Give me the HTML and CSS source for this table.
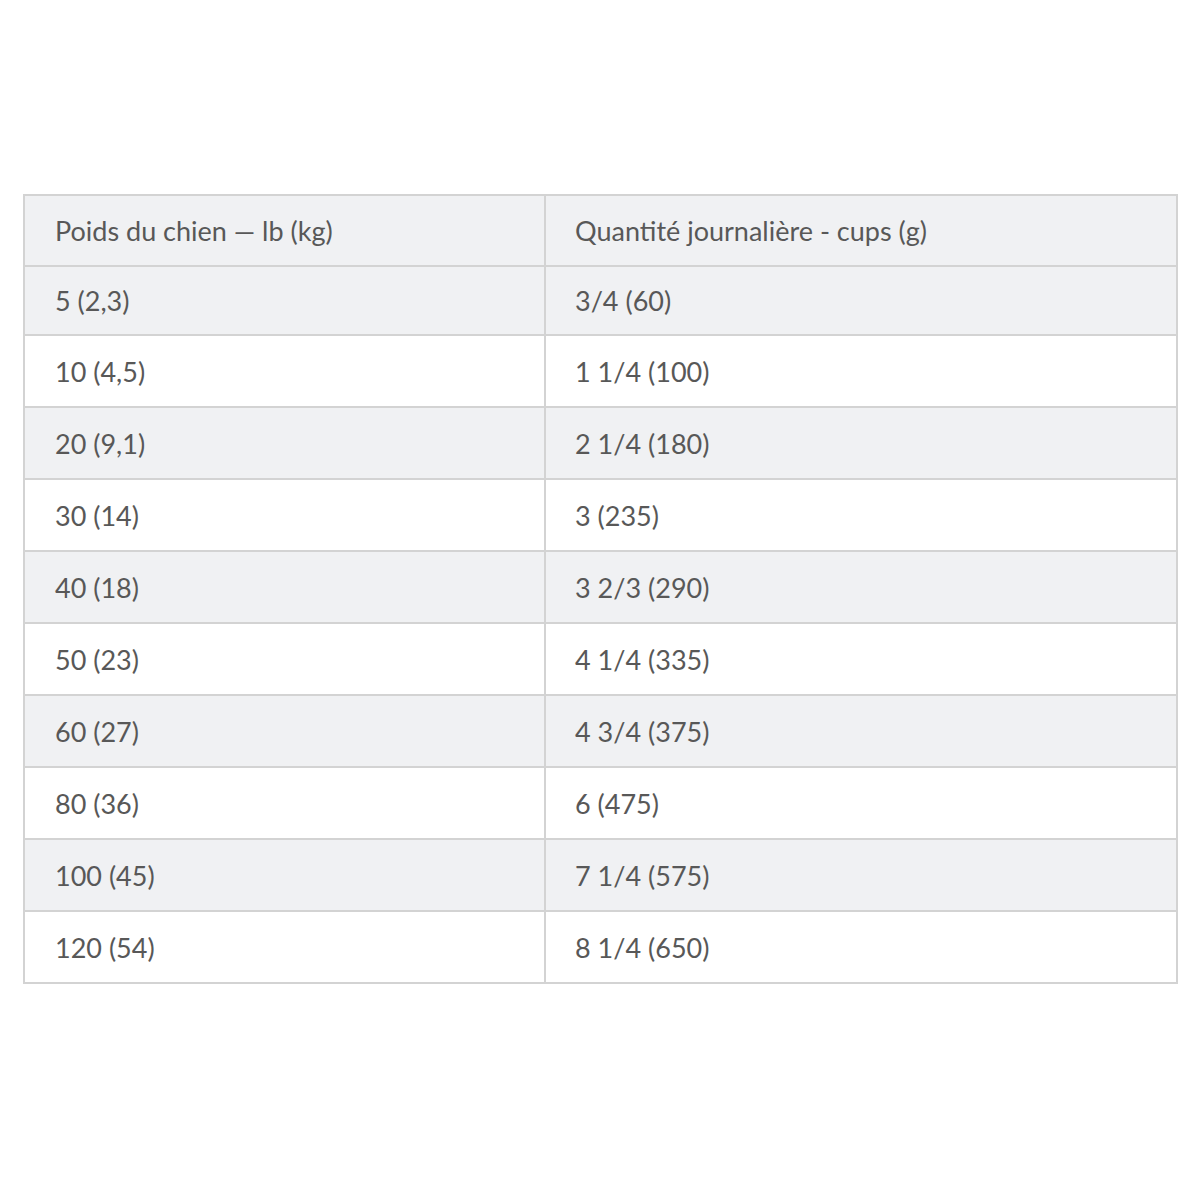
FILE: index.html
```html
<!DOCTYPE html>
<html lang="fr">
<head>
<meta charset="utf-8">
<link rel="stylesheet" href="styles.css">
</head>
<body>
<div class="page">
<table class="feed">
<thead>
<tr><th>Poids du chien — lb (kg)</th><th>Quantité journalière - cups (g)</th></tr>
</thead>
<tbody>
<tr><td>5 (2,3)</td><td>3/4 (60)</td></tr>
<tr><td>10 (4,5)</td><td>1 1/4 (100)</td></tr>
<tr><td>20 (9,1)</td><td>2 1/4 (180)</td></tr>
<tr><td>30 (14)</td><td>3 (235)</td></tr>
<tr><td>40 (18)</td><td>3 2/3 (290)</td></tr>
<tr><td>50 (23)</td><td>4 1/4 (335)</td></tr>
<tr><td>60 (27)</td><td>4 3/4 (375)</td></tr>
<tr><td>80 (36)</td><td>6 (475)</td></tr>
<tr><td>100 (45)</td><td>7 1/4 (575)</td></tr>
<tr><td>120 (54)</td><td>8 1/4 (650)</td></tr>
</tbody>
</table>
</div>
</body>
</html>
```
FILE: styles.css
```css
html, body {
  margin: 0;
  padding: 0;
  background: #ffffff;
}
.page {
  padding: 194px 22px 0 23px;
}
.feed {
  width: 1155px;
  border-collapse: collapse;
  table-layout: fixed;
  font-family: Lato, "Open Sans", sans-serif;
  font-size: 27px;
  color: #585858;
}
.feed th, .feed td {
  border: 2px solid #d3d3d3;
  height: 72px;
  padding: 0 0 0 30px;
  text-align: left;
  font-weight: normal;
  vertical-align: middle;
  box-sizing: border-box;
}
.feed th {
  height: 71px;
}
.feed tbody tr:first-child td {
  height: 69px;
}
.feed th + th, .feed td + td {
  padding-left: 29px;
}
.feed th:first-child, .feed td:first-child {
  width: 521px;
}
.feed thead tr {
  background: #f0f1f3;
}
.feed tbody tr:nth-child(odd) {
  background: #f0f1f3;
}
.feed tbody tr:nth-child(even) {
  background: #ffffff;
}
```
